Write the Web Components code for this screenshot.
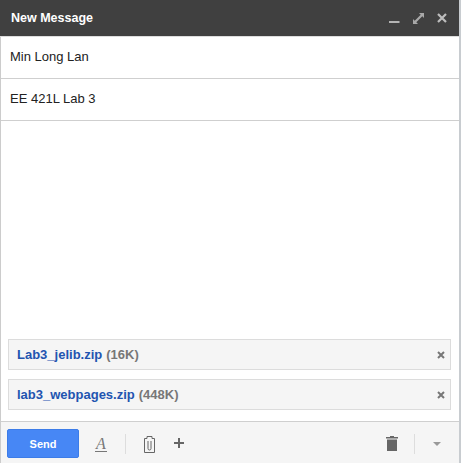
<!DOCTYPE html>
<html>
<head>
<meta charset="utf-8">
<style>
  html, body { margin: 0; padding: 0; height: 100%; background: #fff; }
  body { font-family: "Liberation Sans", Arial, sans-serif; overflow: hidden; }
</style>
</head>
<body>
<compose-window>
  <compose-header slot="header">New Message</compose-header>
  <compose-field>Min Long Lan</compose-field>
  <compose-field>EE 421L Lab 3</compose-field>
  <div slot="attachments">
    <compose-attachment name="Lab3_jelib.zip" size="(16K)"></compose-attachment>
    <compose-attachment name="lab3_webpages.zip" size="(448K)"></compose-attachment>
  </div>
  <compose-toolbar slot="footer"></compose-toolbar>
</compose-window>
<script>
class ComposeWindow extends HTMLElement {
  constructor() {
    super();
    this.attachShadow({ mode: "open" }).innerHTML = `
    <style>
      :host {
        display: flex;
        flex-direction: column;
        box-sizing: border-box;
        width: 461px;
        height: 463px;
        border-left: 1px solid #ccc;
        border-right: 2px solid #c8ccd0;
      }
      .body { flex: 1; }
      ::slotted([slot="attachments"]) { padding-bottom: 2px; }
    </style>
    <slot name="header"></slot>
    <slot></slot>
    <div class="body"></div>
    <slot name="attachments"></slot>
    <slot name="footer"></slot>`;
  }
}

class ComposeHeader extends HTMLElement {
  constructor() {
    super();
    this.attachShadow({ mode: "open" }).innerHTML = `
    <style>
      :host {
        display: flex;
        align-items: center;
        height: 36px;
        margin-left: -1px;
        padding: 0 12px 0 11px;
        background: #404040;
        border-bottom: 1px solid #ddd;
        color: #fff;
        font-size: 12.5px;
        font-weight: bold;
      }
      .title { flex: 1; padding-bottom: 1px; }
      .icons { display: flex; align-items: center; gap: 13px; }
      svg { display: block; }
    </style>
    <span class="title"><slot></slot></span>
    <div class="icons">
      <svg width="11" height="11" viewBox="0 0 11 11"><path d="M0 8h10.500v2H0z" fill="#b4b4b4"/></svg>
      <svg width="11" height="11" viewBox="0 0 11 11" fill="#a8a8a8"><path d="M6 0h5v5L9.300 3.300 3.300 9.300 5 11H0V6l1.700 1.700 6-6z"/></svg>
      <svg width="10" height="10" viewBox="0 0 10 10"><path d="M1 1l8 8M9 1l-8 8" stroke="#bdbdbd" stroke-width="2.200"/></svg>
    </div>`;
  }
}

class ComposeField extends HTMLElement {
  constructor() {
    super();
    this.attachShadow({ mode: "open" }).innerHTML = `
    <style>
      :host {
        display: flex;
        align-items: center;
        box-sizing: border-box;
        height: 42px;
        padding: 0 0 2px 9px;
        border-bottom: 1px solid #cfcfcf;
        color: #222;
        font-size: 13px;
      }
    </style>
    <slot></slot>`;
  }
}

class ComposeAttachment extends HTMLElement {
  constructor() {
    super();
    const name = this.getAttribute("name");
    const size = this.getAttribute("size");
    this.attachShadow({ mode: "open" }).innerHTML = `
    <style>
      :host {
        display: flex;
        align-items: center;
        box-sizing: border-box;
        height: 31px;
        margin: 0 8px 9px 7px;
        padding: 0 5px 0 8px;
        background: #f5f5f5;
        border: 1px solid #dcdcdc;
        font-size: 13px;
        font-weight: bold;
      }
      .name { color: #2254b0; }
      .size { color: #777; margin-left: 4px; flex: 1; }
      svg { display: block; }
    </style>
    <span class="name">${name}</span>
    <span class="size">${size}</span>
    <svg width="8" height="8" viewBox="0 0 8 8"><path d="M1 1l6 6M7 1l-6 6" stroke="#777" stroke-width="2"/></svg>`;
  }
}

class ComposeToolbar extends HTMLElement {
  constructor() {
    super();
    this.attachShadow({ mode: "open" }).innerHTML = `
    <style>
      :host {
        display: flex;
        align-items: center;
        box-sizing: border-box;
        height: 42px;
        padding: 2px 18px 0 6px;
        background: #f5f5f5;
        border-top: 1px solid #cfcfcf;
      }
      .send {
        box-sizing: border-box;
        width: 72px;
        height: 29px;
        border: 1px solid #3c7ce8;
        border-radius: 2px;
        background: #4787f5;
        color: #fff;
        font: bold 11px "Liberation Sans", Arial, sans-serif;
        text-align: center;
        padding: 0;
      }
      .a {
        margin-left: 16px;
        width: 12px;
        border-bottom: 1px solid #777;
        color: #777;
        font: italic 16px/15px "Liberation Serif", serif;
        text-align: center;
      }
      .sep { width: 1px; height: 20px; background: #ddd; }
      .sep.first { margin: 0 18px 0 18px; }
      .grow { flex: 1; }
      .sep.second { margin: 0 18px 0 16px; }
      svg { display: block; }
      .clip { margin-top: 2px; }
      .plus { margin-left: 19px; margin-top: -1px; }
    </style>
    <button class="send">Send</button>
    <div class="a">A</div>
    <div class="sep first"></div>
    <svg class="clip" width="11" height="17" viewBox="0 0 11 17" fill="none" stroke="#666"><path d="M.5 2.500h2.500V.5h5v2h2.500v14H.5z"/><path d="M4 5v7.500a1.500 1.500 0 0 0 3 0V5"/></svg>
    <svg class="plus" width="10" height="10" viewBox="0 0 10 10"><path d="M0 4h10v2H0zM4 0h2v10H4z" fill="#666"/></svg>
    <div class="grow"></div>
    <svg width="12" height="15" viewBox="0 0 12 15" fill="#666"><path d="M0 1h4V0h4v1h4v1.500H0zM1 3.500h10V15H1z"/></svg>
    <div class="sep second"></div>
    <svg width="8" height="4" viewBox="0 0 8 4"><path d="M0 0h8L4 4z" fill="#999"/></svg>`;
  }
}

customElements.define("compose-window", ComposeWindow);
customElements.define("compose-header", ComposeHeader);
customElements.define("compose-field", ComposeField);
customElements.define("compose-attachment", ComposeAttachment);
customElements.define("compose-toolbar", ComposeToolbar);
</script>
</body>
</html>
